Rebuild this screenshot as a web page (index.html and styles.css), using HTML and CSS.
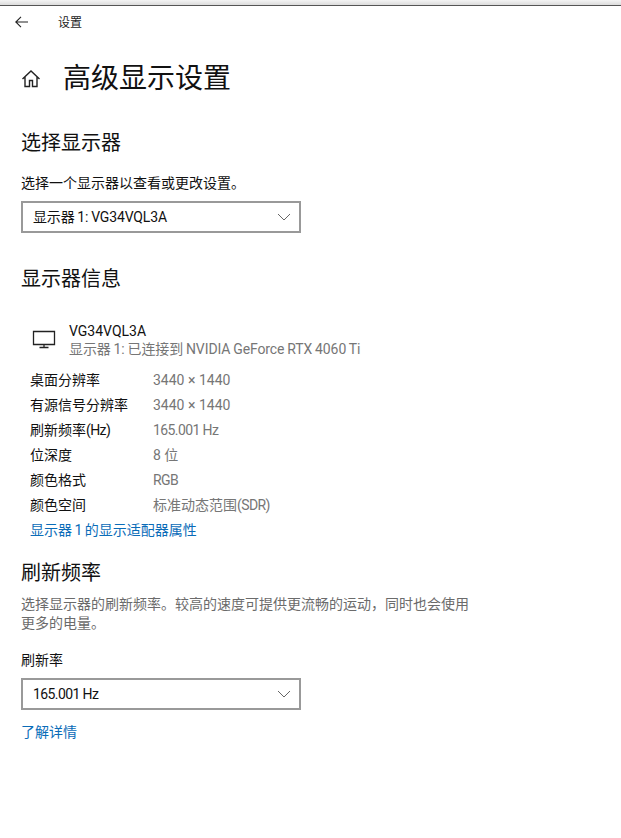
FILE: index.html
```html
<!DOCTYPE html>
<html lang="zh-CN">
<head>
<meta charset="utf-8">
<title>设置</title>
<link rel="stylesheet" href="styles.css">
</head>
<body>
<div class="chrome"></div>
<header class="topbar">
  <svg class="back" width="13" height="12" viewBox="0 0 13 12"><path d="M6 .8.8 6 6 11.200M.8 6H13" fill="none" stroke="#222" stroke-width="1.100"/></svg>
  <span class="app">设置</span>
</header>
<main class="page">
  <div class="title-row">
    <svg class="home" width="20" height="20" viewBox="0 0 20 20"><path d="M1.500 10 10 2l8.500 8M4 8v9.500h4.500v-6h3v6H16V8" fill="none" stroke="#222" stroke-width="1.400"/></svg>
    <h1>高级显示设置</h1>
  </div>

  <h2 class="h-select">选择显示器</h2>
  <label class="label l-select">选择一个显示器以查看或更改设置。</label>
  <div class="select">
    <span class="tight">显示器 1: VG34VQL3A</span>
    <svg width="14" height="8" viewBox="0 0 14 8"><path d="M1 1l6 6 6-6" fill="none" stroke="#666" stroke-width="1"/></svg>
  </div>

  <h2 class="h-info">显示器信息</h2>
  <div class="monitor">
    <svg class="mon-icon" width="24" height="20" viewBox="0 0 24 20"><path d="M1.500 2.500h21v13h-21zM12 15.500v2.500M7.500 18.500h9" fill="none" stroke="#222" stroke-width="1.300"/></svg>
    <div class="mon-text">
      <div class="mon-name">VG34VQL3A</div>
      <div class="mon-sub">显示器 1: 已连接到 NVIDIA GeForce RTX 4060 Ti</div>
    </div>
  </div>
  <dl class="specs">
    <dt>桌面分辨率</dt><dd>3440 × 1440</dd>
    <dt>有源信号分辨率</dt><dd>3440 × 1440</dd>
    <dt>刷新频率<span class="lat">(Hz)</span></dt><dd class="lat">165.001 Hz</dd>
    <dt>位深度</dt><dd>8 位</dd>
    <dt>颜色格式</dt><dd class="lat">RGB</dd>
    <dt>颜色空间</dt><dd>标准动态范围<span class="lat">(SDR)</span></dd>
  </dl>
  <a class="link adapter" href="#">显示器 1 的显示适配器属性</a>

  <h2 class="h-rate">刷新频率</h2>
  <p class="desc">选择显示器的刷新频率。较高的速度可提供更流畅的运动，同时也会使用更多的电量。</p>
  <label class="label l-rate">刷新率</label>
  <div class="select">
    <span class="lat">165.001 Hz</span>
    <svg width="14" height="8" viewBox="0 0 14 8"><path d="M1 1l6 6 6-6" fill="none" stroke="#666" stroke-width="1"/></svg>
  </div>
  <a class="link more" href="#">了解详情</a>
</main>
</body>
</html>
```

FILE: styles.css
```css
* { box-sizing: border-box; margin: 0; padding: 0; }
html, body { background: #fff; }
body {
  width: 621px;
  height: 838px;
  overflow: hidden;
  font-family: "Roboto", "Noto Sans CJK SC", sans-serif;
  font-size: 14px;
  line-height: 20px;
  color: #111;
}
.chrome {
  height: 6px;
  background: linear-gradient(#f4f4f4, #dcdcdc);
  border-bottom: 1px solid #555;
}
.topbar {
  height: 32px;
  display: flex;
  align-items: center;
  padding: 2px 0 0 15px;
}
.back { flex: none; margin-top: -3px; }
.app { margin-left: 30px; font-size: 12px; color: #222; }
.page { padding-left: 21px; }
.title-row {
  display: flex;
  align-items: center;
  margin-top: 19px;
  height: 44px;
}
.home { flex: none; }
h1 { font-weight: 400; font-size: 28px; line-height: 44px; margin-left: 22px; color: #111; }
h2 { font-weight: 400; font-size: 20px; line-height: 28px; color: #111; }
.h-select { margin-top: 28px; }
.label { display: block; font-size: 14px; }
.l-select { margin-top: 16px; }
.select {
  width: 280px;
  height: 32px;
  margin-top: 8px;
  border: 2px solid #999;
  display: flex;
  align-items: center;
  justify-content: space-between;
  padding: 0 8px 0 10px;
  font-size: 14px;
}
.tight { word-spacing: -.5px; letter-spacing: -.15px; }
.lat { letter-spacing: -.6px; }
.h-info { margin-top: 32px; }
.monitor { display: flex; margin-top: 30px; padding-left: 11px; }
.mon-icon { margin-top: 6px; flex: none; }
.mon-text { margin-left: 13px; }
.mon-name { line-height: 17px; font-size: 14px; }
.mon-sub { line-height: 18px; color: #767676; font-size: 14px; word-spacing: -.5px; letter-spacing: -.1px; }
.specs {
  display: grid;
  grid-template-columns: 123px auto;
  grid-auto-rows: 25px;
  align-items: center;
  margin-top: 9px;
  padding-left: 9px;
}
.specs dd { color: #767676; }
.link { color: #0a6cb8; text-decoration: none; display: block; }
.adapter { margin-left: 9px; margin-top: 3px; word-spacing: -1px; }
.h-rate { margin-top: 19px; }
.desc { width: 452px; margin-top: 8px; color: #6b6b6b; line-height: 19px; }
.l-rate { margin-top: 17px; }
.more { margin-top: 12px; }
```
